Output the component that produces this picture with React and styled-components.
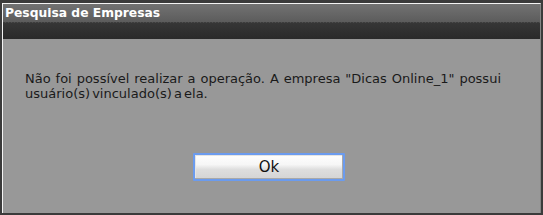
import React from 'react';
import styled, { createGlobalStyle } from 'styled-components';

const GlobalStyle = createGlobalStyle`
    html, body {
        margin: 0;
        padding: 0;
        background: #3b3b3b;
    }
    body {
        width: 543px;
        height: 215px;
        overflow: hidden;
    }
`;

const Frame = styled.div`
    width: 543px;
    height: 215px;
    box-sizing: border-box;
    padding: 3px 2px 2px 2px;
    background: #3b3b3b;
`;

const Dialog = styled.div`
    height: 100%;
    box-sizing: border-box;
    display: flex;
    flex-direction: column;
    border-top: 1px solid #f4f4f4;
    border-left: 1px solid #f4f4f4;
    border-right: 1px solid #858585;
    background: #989898;
`;

const Header = styled.div`
    height: 35px;
    display: flex;
    flex-direction: column;
`;

const TitleBar = styled.div`
    height: 18px;
    background: linear-gradient(#727272, #5c5c5c);
    display: flex;
    align-items: center;
    padding-left: 2px;
`;

const Title = styled.span`
    color: #ffffff;
    font-family: "DejaVu Sans", Verdana, sans-serif;
    font-weight: bold;
    font-size: 12.3px;
`;

const Dotted = styled.div`
    height: 1px;
    background: repeating-linear-gradient(90deg, #3c3c3c 0 2px, #4c4c4c 2px 3px);
`;

const DarkBand = styled.div`
    flex: 1;
    background: linear-gradient(#363636, #2a2a2a);
`;

const Body = styled.div`
    flex: 1;
    display: flex;
    flex-direction: column;
    padding: 32px 0 0 22px;
`;

const Message = styled.p`
    width: 476px;
    margin: 0;
    color: #1a1a1a;
    font-family: "DejaVu Sans", Verdana, sans-serif;
    font-size: 13px;
    line-height: 15px;
    word-spacing: -2px;
    text-align: justify;
`;

const Actions = styled.div`
    display: flex;
    margin-top: 52px;
    padding-left: 168px;
`;

const OkButton = styled.button`
    width: 152px;
    height: 28px;
    box-sizing: border-box;
    border: 2px solid #6b9bee;
    border-radius: 1px;
    background: linear-gradient(#fefefe 0%, #f6f6f6 40%, #dedede 60%, #d4d4d4 100%);
    box-shadow: inset -1px -1px 0 #a8a8a8, inset 1px 1px 0 #e4e4e4;
    font-family: "DejaVu Sans", Verdana, sans-serif;
    font-size: 15px;
    color: #111;
    padding: 0;
    cursor: pointer;
`;

const App = () => {
    return (
        <>
            <GlobalStyle />
            <Frame>
                <Dialog>
                    <Header>
                        <TitleBar>
                            <Title>Pesquisa de Empresas</Title>
                        </TitleBar>
                        <Dotted />
                        <DarkBand />
                    </Header>
                    <Body>
                        <Message>
                            Não foi possível realizar a operação. A empresa "Dicas Online_1" possui
                            usuário(s) vinculado(s) a ela.
                        </Message>
                        <Actions>
                            <OkButton>Ok</OkButton>
                        </Actions>
                    </Body>
                </Dialog>
            </Frame>
        </>
    );
};

export default App;
